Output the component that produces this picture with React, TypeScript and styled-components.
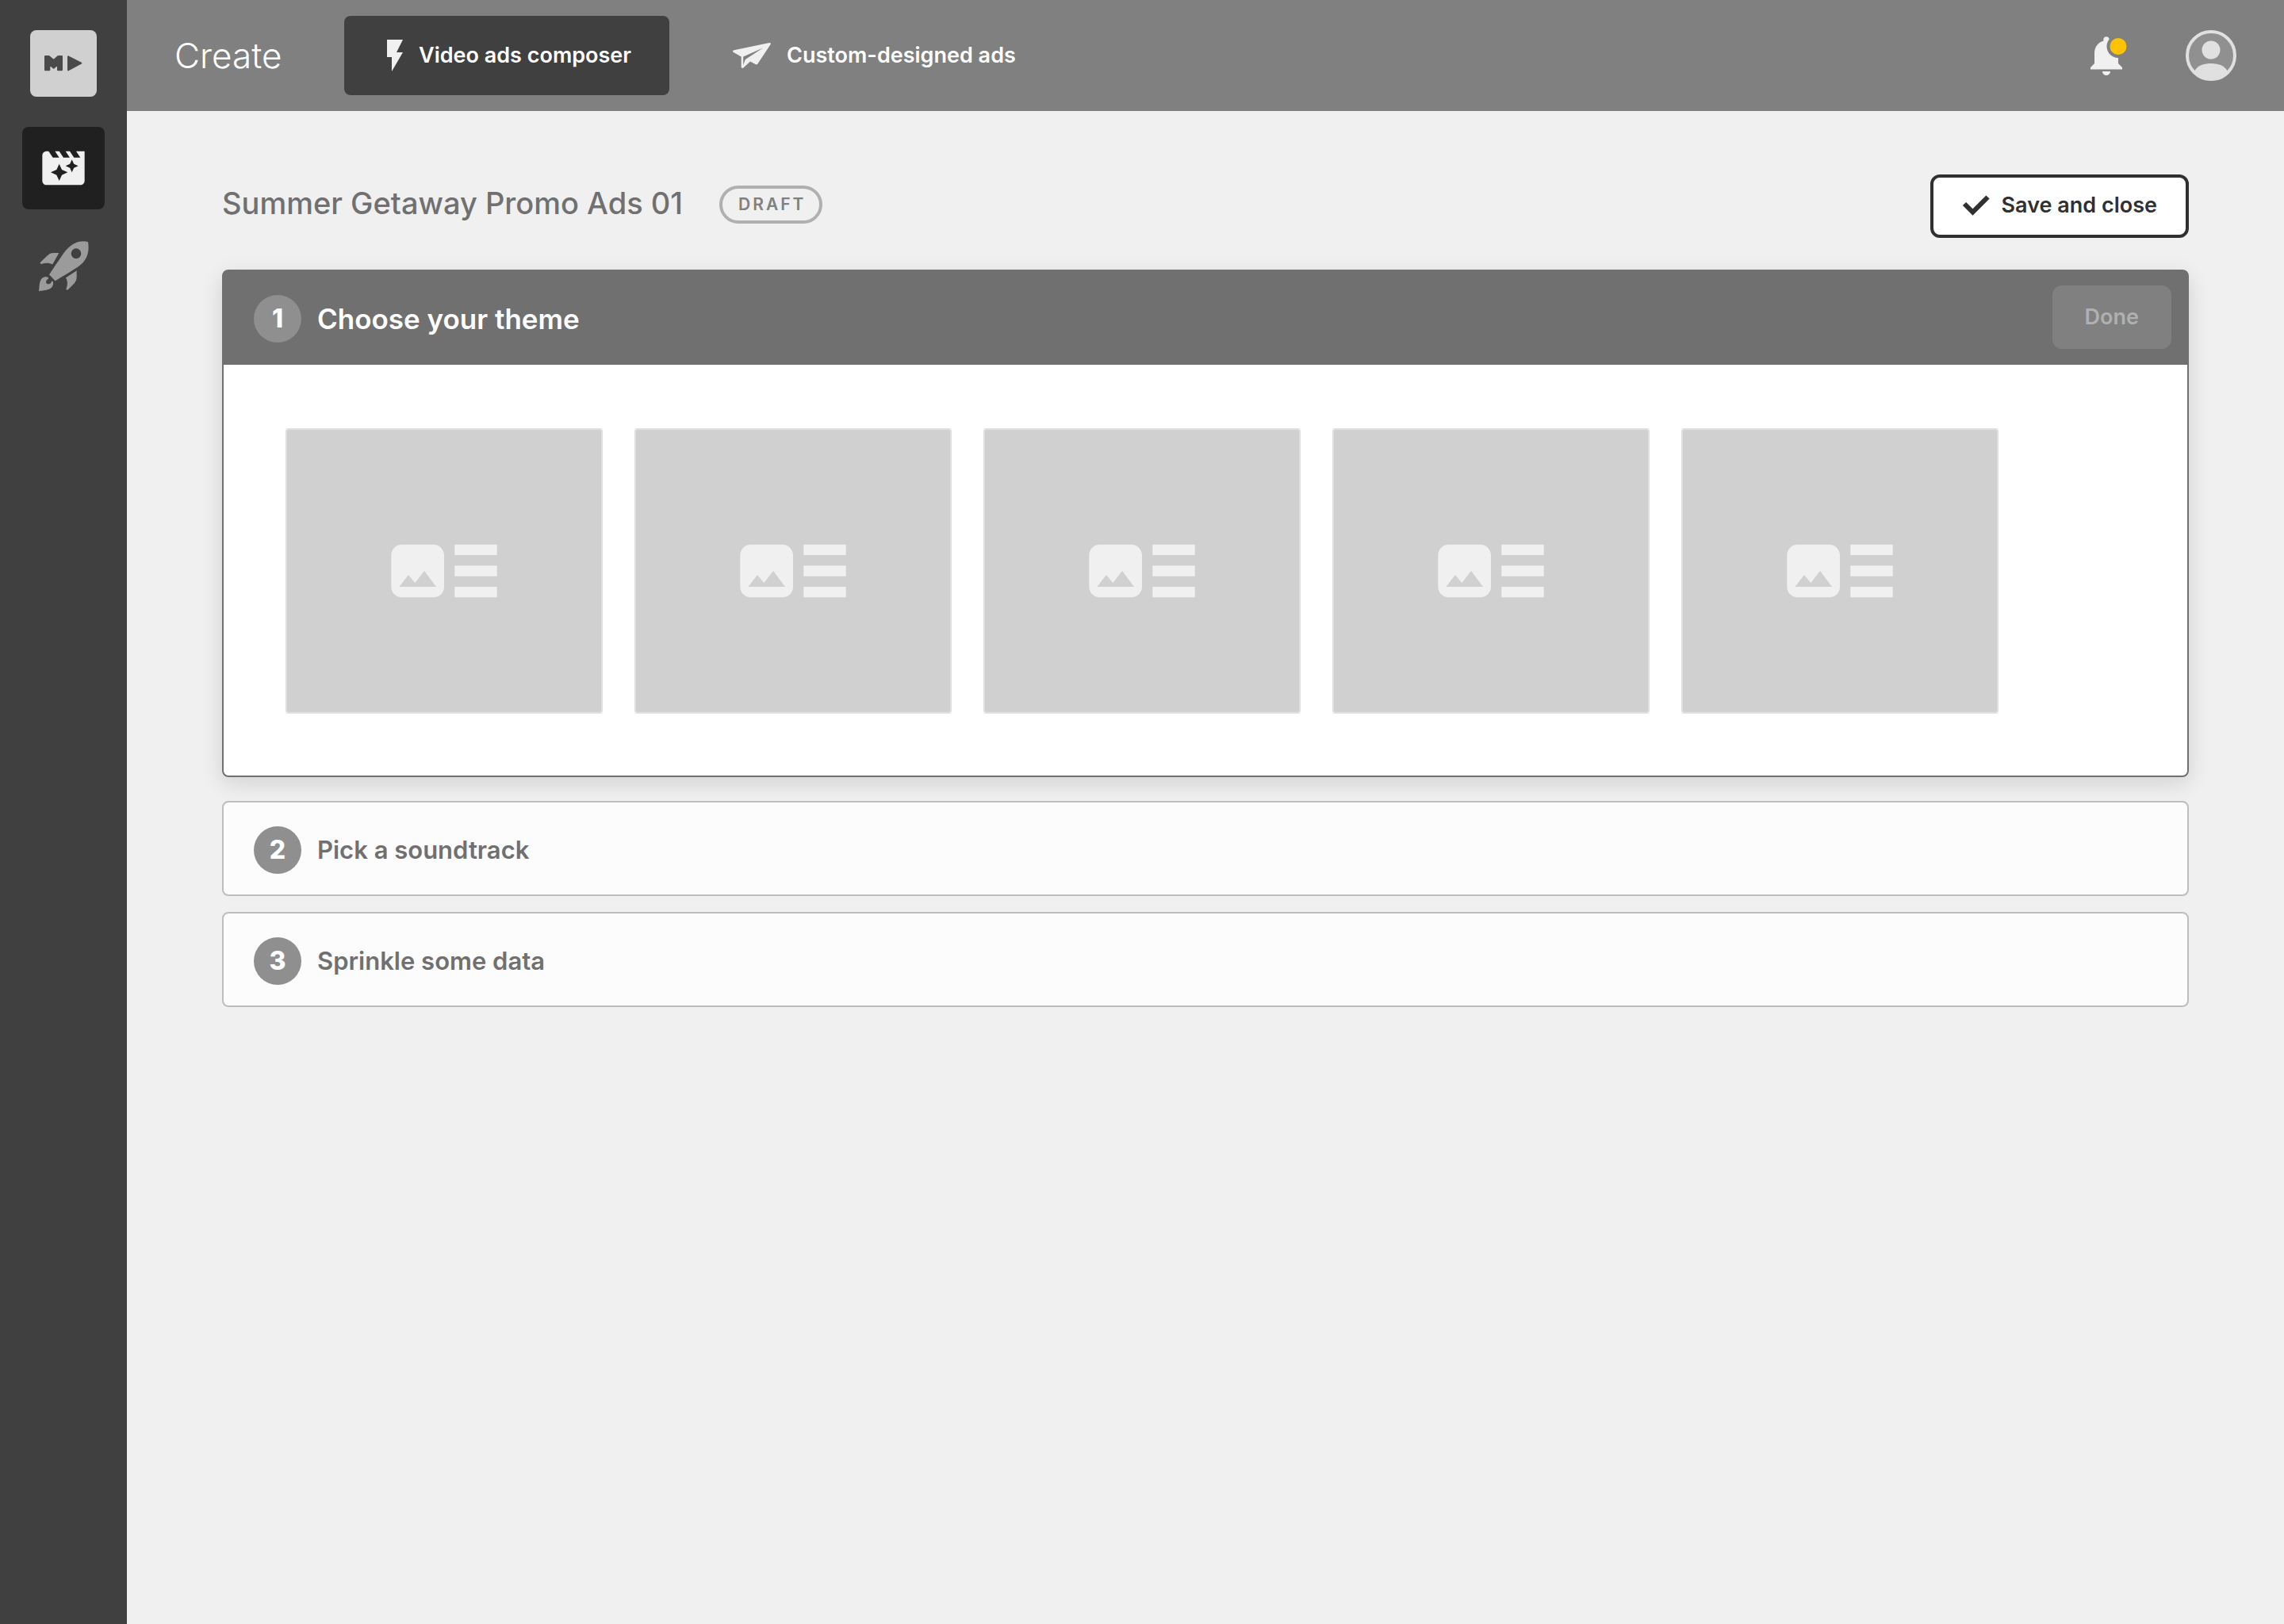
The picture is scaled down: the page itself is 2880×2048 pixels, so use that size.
import React from "react";
import styled, { createGlobalStyle, css } from "styled-components";
import { MdArtTrack, MdMovieFilter } from "react-icons/md";

const GlobalStyle = createGlobalStyle`
  *, *::before, *::after { box-sizing: border-box; }
  html, body { margin: 0; padding: 0; }
  body {
    background: #f0f0f0;
    font-family: Inter, "Liberation Sans", sans-serif;
    -webkit-font-smoothing: antialiased;
  }
  button { font-family: inherit; cursor: pointer; }
  svg { display: block; flex: none; }
`;

const Shell = styled.div`
  display: flex;
  min-height: 100vh;
`;

const Sidebar = styled.nav`
  flex: none;
  width: 160px;
  padding-top: 38px;
  display: flex;
  flex-direction: column;
  align-items: center;
  background: #404040;
`;

const Logo = styled.a`
  display: flex;
  align-items: center;
  justify-content: center;
  width: 84px;
  height: 84px;
  margin-bottom: 38px;
  border-radius: 8px;
  background: #d0d0d0;
`;

const SideLink = styled.a<{ $active?: boolean }>`
  display: flex;
  align-items: center;
  justify-content: center;
  width: 104px;
  height: 104px;
  margin-bottom: 19px;
  border-radius: 8px;
  color: ${(p) => (p.$active ? "#f0f0f0" : "#9b9b9b")};
  background: ${(p) => (p.$active ? "#202020" : "transparent")};
`;

const Main = styled.div`
  flex: 1;
  min-width: 0;
`;

const TopBar = styled.header`
  display: flex;
  align-items: center;
  height: 140px;
  padding: 0 60px;
  background: #808080;
  color: #ffffff;
`;

const SectionName = styled.div`
  width: 214px;
  font-size: 44px;
  line-height: 60px;
  font-weight: 300;
`;

const Tabs = styled.nav`
  display: flex;
  gap: 26px;
`;

const Tab = styled.a<{ $active?: boolean }>`
  display: flex;
  align-items: center;
  gap: 20px;
  height: 100px;
  padding: 0 48px 0 54px;
  border-radius: 8px;
  background: ${(p) => (p.$active ? "#404040" : "transparent")};
  color: #ffffff;
  font-size: 27px;
  line-height: 40px;
  font-weight: 600;
  text-decoration: none;
  white-space: nowrap;
`;

const TopActions = styled.div`
  display: flex;
  align-items: center;
  gap: 70px;
  margin-left: auto;
`;

const IconButton = styled.button`
  padding: 0;
  border: 0;
  background: transparent;
`;

const Content = styled.main`
  padding: 80px 120px;
`;

const TitleRow = styled.div`
  display: flex;
  align-items: center;
  margin-bottom: 40px;
`;

const Title = styled.h1`
  margin: 0;
  padding-bottom: 8px;
  font-size: 38px;
  line-height: 48px;
  font-weight: 500;
  color: #707070;
`;

const StatusPill = styled.span`
  margin: 0 0 4px 46px;
  padding: 8px 17px 8px 20px;
  border: 4px solid #b0b0b0;
  border-radius: 24px;
  font-size: 21px;
  line-height: 24px;
  font-weight: 600;
  letter-spacing: 3px;
  color: #808080;
`;

const buttonBase = css`
  display: flex;
  align-items: center;
  height: 80px;
  margin-left: auto;
  border-radius: 12px;
  font-size: 27px;
  line-height: 40px;
  font-weight: 600;
`;

const SaveButton = styled.button`
  ${buttonBase}
  gap: 14px;
  padding: 0 36px 2px;
  border: 4px solid #303030;
  background: #ffffff;
  color: #303030;
`;

const DoneButton = styled.button`
  ${buttonBase}
  margin-bottom: 4px;
  padding: 0 41px;
  border: 0;
  background: #808080;
  color: #b0b0b0;
  cursor: default;
`;

const Steps = styled.div`
  display: flex;
  flex-direction: column;
  gap: 20px;
`;

const Panel = styled.section<{ $open?: boolean }>`
  border: 2px solid ${(p) => (p.$open ? "#707070" : "#bdbdbd")};
  border-radius: 8px;
  background: ${(p) => (p.$open ? "#ffffff" : "#fcfcfc")};
  ${(p) =>
    p.$open &&
    css`
      margin-bottom: 10px;
      box-shadow: 0 8px 28px rgba(0, 0, 0, 0.13);
    `}
`;

const PanelHeader = styled.div<{ $open?: boolean }>`
  display: flex;
  align-items: center;
  gap: 20px;
  height: ${(p) => (p.$open ? "118px" : "116px")};
  padding: ${(p) => (p.$open ? "2px" : "4px")} 20px 0 38px;
  background: ${(p) => (p.$open ? "#707070" : "transparent")};
  color: ${(p) => (p.$open ? "#ffffff" : "#707070")};
`;

const StepNumber = styled.span`
  display: flex;
  align-items: center;
  justify-content: center;
  width: 60px;
  height: 60px;
  border-radius: 50%;
  background: #8f8f8f;
  color: #ffffff;
  font-size: 32px;
  line-height: 40px;
  font-weight: 800;
`;

const StepTitle = styled.h2<{ $open?: boolean }>`
  margin: 0;
  font-size: ${(p) => (p.$open ? "35px" : "31px")};
  line-height: 44px;
  font-weight: 600;
`;

const ThemeGrid = styled.div`
  display: flex;
  flex-wrap: wrap;
  gap: 40px;
  padding: 80px 78px 78px;
`;

const ThemeCard = styled.button`
  display: flex;
  align-items: center;
  justify-content: center;
  width: 400px;
  height: 360px;
  padding: 0;
  border: 2px solid #e0e0e0;
  border-radius: 4px;
  background: #d0d0d0;
  color: #f0f0f0;
`;

const LogoMark = () => (
  <svg width="70" height="40" viewBox="0 0 210 120" fill="#4a4a4a" stroke="#4a4a4a" strokeWidth="6" strokeLinejoin="round" aria-hidden="true">
    <path d="M36 33H50L68 48L85 33H99V85H84V63L68 77L52 63V85H36Z" />
    <path d="M123 34L172 59L123 85Z" />
  </svg>
);

const RocketIcon = () => (
  <svg width="80" height="80" viewBox="0 0 240 240" fill="currentColor" aria-hidden="true">
    <path
      fillRule="evenodd"
      d="M213 30C186 23 158 32 134 57C124 67 117 79 66 154L89 178C147 141 178 126 195 107C216 83 217 54 213 30ZM168 55A19 19 0 1 1 168 93A19 19 0 1 1 168 55Z"
    />
    <path d="M103 72H82C71 72 64 77 57 84L33 107C30 111 33 115 38 113C53 109 66 109 79 115Z" />
    <path d="M170 139V162C170 176 165 182 159 189L138 210C133 214 129 211 131 206C137 191 136 178 129 166Z" />
    <path d="M27 217C29 203 28 190 32 179C37 164 50 158 62 164C66 167 63 170 58 173C49 182 57 192 67 189C75 187 73 181 77 178C84 181 82 195 76 202C66 213 48 213 27 217Z" />
  </svg>
);

const BoltIcon = () => (
  <svg width="20" height="40" viewBox="0 0 10 20" fill="#f0f0f0" aria-hidden="true">
    <path d="M0 0V11H3V20L10 8H6L10 0Z" />
  </svg>
);

const PlaneIcon = () => (
  <svg width="48" height="32" viewBox="0 0 48 32" fill="#f0f0f0" aria-hidden="true">
    <path d="M46 0L1.5 9.2C-.2 9.6-.4 11.2 1 12L10.7 17.6V30.2C10.7 32 12.6 32.4 13.6 31.2L22 23.6L29 27.2C30 27.6 30.8 27.2 31.4 26.4L47.6 2C48.4.8 47.4-.3 46 0ZM38 6.6L17 20.2C15.6 21.2 15.2 22 14.8 23.4L13.2 28.2V17.4Z" />
  </svg>
);

const BellIcon = () => (
  <svg width="60" height="60" viewBox="0 0 24 24" aria-hidden="true">
    <mask id="bell-cutout">
      <rect width="24" height="24" fill="#fff" />
      <circle cx="18" cy="7.4" r="5.8" fill="#000" />
    </mask>
    <path
      fill="#f0f0f0"
      mask="url(#bell-cutout)"
      d="M12 22c1.1 0 2-.9 2-2h-4c0 1.1.9 2 2 2zM18 16v-5c0-3.07-1.63-5.64-4.5-6.32V4c0-.83-.67-1.5-1.5-1.5s-1.5.67-1.5 1.5v.68C7.64 5.36 6 7.92 6 11v5l-2 2v1h16v-1l-2-2z"
    />
    <circle cx="18" cy="7.4" r="4.2" fill="#fdc200" />
  </svg>
);

const AvatarIcon = () => (
  <svg width="64" height="64" viewBox="0 0 64 64" aria-hidden="true">
    <circle cx="32" cy="32" r="30" fill="#909090" />
    <circle cx="32" cy="25" r="11.5" fill="#e0e0e0" />
    <path fill="#e0e0e0" d="M11 52C15 44 24 42 32 42S49 44 53 52C47 59 40 62 32 62S17 59 11 52Z" />
    <circle cx="32" cy="32" r="30" fill="none" stroke="#e0e0e0" strokeWidth="4" />
  </svg>
);

const CheckIcon = () => (
  <svg width="36" height="28" viewBox="0 0 36 28" fill="none" stroke="#303030" strokeWidth="6" aria-hidden="true">
    <path d="M3 12L13.5 22.5L32.5 3.5" />
  </svg>
);

const themes = ["Theme 1", "Theme 2", "Theme 3", "Theme 4", "Theme 5"];

const closedSteps = [
  { number: 2, title: "Pick a soundtrack" },
  { number: 3, title: "Sprinkle some data" },
];

export default function App() {
  return (
    <>
      <GlobalStyle />
      <Shell>
        <Sidebar aria-label="Main">
          <Logo href="#" aria-label="Home">
            <LogoMark />
          </Logo>
          <SideLink href="#create" aria-label="Create" $active>
            <MdMovieFilter size={64} />
          </SideLink>
          <SideLink href="#launch" aria-label="Launch">
            <RocketIcon />
          </SideLink>
        </Sidebar>
        <Main>
          <TopBar>
            <SectionName>Create</SectionName>
            <Tabs aria-label="Create">
              <Tab href="#composer" $active>
                <BoltIcon />
                Video ads composer
              </Tab>
              <Tab href="#custom">
                <PlaneIcon />
                Custom-designed ads
              </Tab>
            </Tabs>
            <TopActions>
              <IconButton type="button" aria-label="Notifications">
                <BellIcon />
              </IconButton>
              <IconButton type="button" aria-label="Account">
                <AvatarIcon />
              </IconButton>
            </TopActions>
          </TopBar>
          <Content>
            <TitleRow>
              <Title>Summer Getaway Promo Ads 01</Title>
              <StatusPill>DRAFT</StatusPill>
              <SaveButton type="button">
                <CheckIcon />
                Save and close
              </SaveButton>
            </TitleRow>
            <Steps>
              <Panel $open>
                <PanelHeader $open>
                  <StepNumber>1</StepNumber>
                  <StepTitle $open>Choose your theme</StepTitle>
                  <DoneButton type="button" disabled>
                    Done
                  </DoneButton>
                </PanelHeader>
                <ThemeGrid>
                  {themes.map((name) => (
                    <ThemeCard key={name} type="button" aria-label={name}>
                      <MdArtTrack size={160} />
                    </ThemeCard>
                  ))}
                </ThemeGrid>
              </Panel>
              {closedSteps.map((step) => (
                <Panel key={step.number}>
                  <PanelHeader>
                    <StepNumber>{step.number}</StepNumber>
                    <StepTitle>{step.title}</StepTitle>
                  </PanelHeader>
                </Panel>
              ))}
            </Steps>
          </Content>
        </Main>
      </Shell>
    </>
  );
}
